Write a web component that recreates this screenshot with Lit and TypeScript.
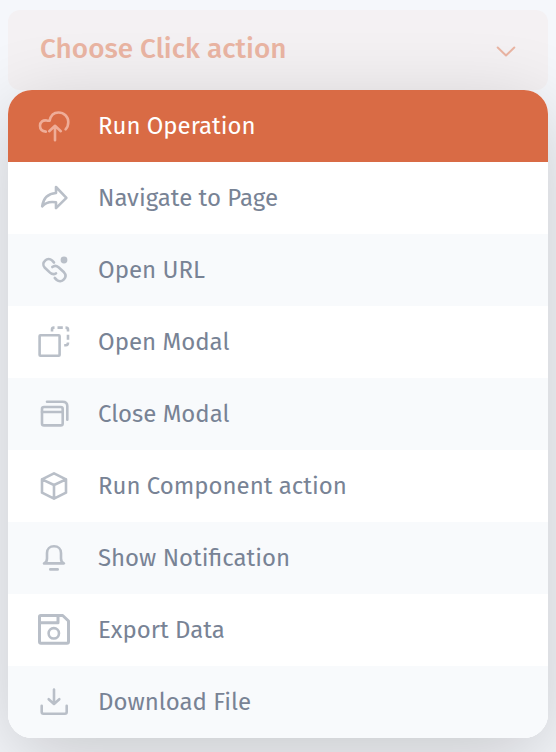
import { LitElement, html, svg, css } from "lit";
import { customElement } from "lit/decorators.js";

const items = [
  { label: "Run Operation", width: 157.5, icon: svg`<path d="M9.8 23.6C6 23.3 4 20.8 4 17.8C4 14 7.2 11.6 11 12.6L13.6 12.8C14.6 7.8 18 4.5 22.5 4.5C28 4.5 32.3 8.8 32.3 14C32.3 17 31.3 19.6 29.6 21.4M19 32.3V18.5M13.2 23.2L19 17.8L24.8 23.2"/>` },
  { label: "Navigate to Page", width: 180, icon: svg`<path d="M20 7L30.4 17.8L20 28.2V22.3C14 21.2 9.5 22.5 6.2 26.3C7.3 18.5 12 13.6 20 13Z"/>` },
  { label: "Open URL", width: 107, icon: svg`<path d="M18 10.5L16 8.4C14 6.5 11.2 6.6 9.3 8.4C7 10.4 6.8 13.4 8.6 15.5L14 20.6C15.8 22.2 18.2 22.4 20 21.4M16.3 15C18 13.6 20.7 13.7 22.5 15.2L28 20.3C29.9 22.4 29.8 25.3 27.9 27.4C25.9 29.6 22.8 29.7 20.8 28L18.8 26"/><circle class="dot" cx="28" cy="8" r="3.4"/>` },
  { label: "Open Modal", width: 131.5, icon: svg`<rect x="3.6" y="11.3" width="20" height="20.4" rx=".8"/><path class="dashed" d="M16 7.6V5.5Q16 3.6 17.8 3.6H18.5M21.5 3.6H26.8M29.5 3.6Q32 3.6 32 5.6V7.6M32 10.8V15.8M32 18.6Q32 21.2 30 21.2H28.2"/>` },
  { label: "Close Modal", width: 131.5, icon: svg`<rect x="6" y="11" width="20.7" height="18.4" rx="2"/><path d="M6 16H26.7M11 5.7H26.5Q31.3 5.7 31.3 10V23.7"/>` },
  { label: "Run Component action", width: 248.7, icon: svg`<path d="M18 5.3L30 11.3V24.7L18 30.7L6 24.7V11.3ZM6 11.3L18 17L30 11.3M18 17V30.7"/>` },
  { label: "Show Notification", width: 192, icon: svg`<path d="M8 23.4C10.3 22.5 11 20.7 11 18.5V13C11 9 13.8 6.3 18 6.3S25 9 25 13V18.5C25 20.7 25.7 22.5 28 23.4ZM14.3 29.4H21.7"/>` },
  { label: "Export Data", width: 126.7, icon: svg`<path class="bold" d="M4.8 3.5H26.7L32.5 9V29.8Q32.5 31.2 31 31.2H4.9Q3.5 31.2 3.5 29.8V4.8Q3.5 3.5 4.8 3.5ZM4 10.7H22V4"/><circle cx="17.8" cy="21.3" r="5.2"/>` },
  { label: "Download File", width: 153, icon: svg`<path d="M18 5.6V19.5M12.7 15.2L18 20L23.3 15.2M5.7 21.8V28Q5.7 29.7 7.4 29.7H29Q30.7 29.7 30.7 28V21.8"/>` },
];

@customElement("app-root")
export class AppRoot extends LitElement {
  static styles = css`
    :host {
      display: block;
      box-sizing: border-box;
      height: 752px;
      padding: 10px 8px 0;
      overflow: hidden;
      background: #f5f7fb;
      font-family: "Fira Sans", "Noto Sans", sans-serif;
    }
    .trigger {
      display: flex;
      align-items: center;
      justify-content: space-between;
      box-sizing: border-box;
      height: 80px;
      padding: 0 30px 0 32px;
      border-radius: 12px;
      background: #f4f1f3;
    }
    .title { display: block; width: 260px; height: 80px; fill: #eab5a3; font-size: 28px; font-weight: 500; }
    .chevron { width: 24px; height: 24px; margin-top: 3px; fill: none; stroke: #eab5a3; stroke-width: 2; stroke-linecap: round; stroke-linejoin: round; }
    .shade {
      position: relative;
      border-radius: 24px;
      box-shadow: 0 20px 80px rgba(0, 0, 0, 0.19);
    }
    .menu {
      margin: 0;
      padding: 0;
      list-style: none;
      overflow: hidden;
      border-radius: 24px;
      background: #fff;
    }
    .item { display: flex; align-items: center; gap: 26px; height: 72px; padding-left: 28px; color: #788395; }
    .item:nth-child(odd) { background: #f8fafc; }
    .item:first-child { background: #d96b45; color: #fff; }
    .icon { flex: none; width: 36px; height: 36px; fill: none; stroke: #b9bfc8; stroke-width: 2.6; stroke-linecap: round; stroke-linejoin: round; }
    .item:first-child .icon { stroke: #efad98; }
    .dot { fill: #b9bfc8; stroke: none; }
    .bold { stroke-width: 3; }
    .dashed { stroke-linecap: butt; }
    .label { display: block; width: 300px; height: 72px; fill: currentColor; font-size: 24px; }
  `;

  render() {
    return html`
      <div class="trigger">
        <svg class="title"><text x="0" y="48" textLength="246.5" lengthAdjust="spacingAndGlyphs">Choose Click action</text></svg>
        <svg class="chevron" viewBox="0 0 24 24"><path d="M3.7 7.5L12 15.5L20.3 7.5" /></svg>
      </div>
      <div class="shade">
        <ul class="menu">
          ${items.map(
            (item) => html`<li class="item">
              <svg class="icon" viewBox="0 0 36 36">${item.icon}</svg>
              <svg class="label"><text x="0" y="44" textLength=${item.width} lengthAdjust="spacingAndGlyphs">${item.label}</text></svg>
            </li>`
          )}
        </ul>
      </div>
    `;
  }
}
